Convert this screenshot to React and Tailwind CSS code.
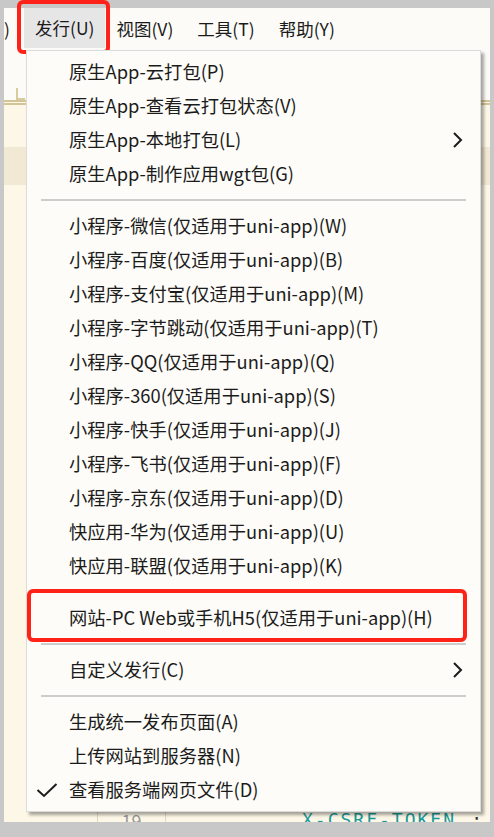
import { useState } from 'react'

const font = { fontFamily: '"Noto Sans CJK SC", "Noto Sans", sans-serif' }

const topMenus = ['发行(U)', '视图(V)', '工具(T)', '帮助(Y)']

// menu groups, separators between
const groups = [
  [
    { label: '原生App-云打包(P)' },
    { label: '原生App-查看云打包状态(V)' },
    { label: '原生App-本地打包(L)', sub: true },
    { label: '原生App-制作应用wgt包(G)' },
  ],
  [
    { label: '小程序-微信(仅适用于uni-app)(W)' },
    { label: '小程序-百度(仅适用于uni-app)(B)' },
    { label: '小程序-支付宝(仅适用于uni-app)(M)' },
    { label: '小程序-字节跳动(仅适用于uni-app)(T)' },
    { label: '小程序-QQ(仅适用于uni-app)(Q)' },
    { label: '小程序-360(仅适用于uni-app)(S)' },
    { label: '小程序-快手(仅适用于uni-app)(J)' },
    { label: '小程序-飞书(仅适用于uni-app)(F)' },
    { label: '小程序-京东(仅适用于uni-app)(D)' },
    { label: '快应用-华为(仅适用于uni-app)(U)' },
    { label: '快应用-联盟(仅适用于uni-app)(K)' },
  ],
  [{ label: '网站-PC Web或手机H5(仅适用于uni-app)(H)', marked: true }],
  [{ label: '自定义发行(C)', sub: true }],
  [
    { label: '生成统一发布页面(A)' },
    { label: '上传网站到服务器(N)' },
    { label: '查看服务端网页文件(D)', checked: true },
  ],
]

function Chevron() {
  return (
    <svg width="12" height="18" viewBox="0 0 12 18" className="text-[#1b1b1b] ml-[-3px]">
      <path d="M3 2 L10 9 L3 16" fill="none" stroke="currentColor" strokeWidth="2" />
    </svg>
  )
}

function Check() {
  return (
    <svg width="22" height="16" viewBox="0 0 22 16" className="text-[#1b1b1b]">
      <path d="M1.5 8 L8 14 L20.5 2" fill="none" stroke="currentColor" strokeWidth="2" />
    </svg>
  )
}

function MenuItem({ item }) {
  return (
    <div className="relative h-[34px] flex items-center text-[18.3px] text-[#1b1b1b]">
      <div className="w-[42px] flex justify-center pr-[2px]">{item.checked && <Check />}</div>
      <span className="flex-1 whitespace-nowrap">{item.label}</span>
      <div className="w-[26px] flex justify-start">{item.sub && <Chevron />}</div>
      {item.marked && (
        <div className="absolute left-0 right-[13px] top-[-12px] bottom-[-7px] border-4 border-[#ff2219] rounded-md" />
      )}
    </div>
  )
}

export default function App() {
  const [open] = useState(true)

  return (
    <div className="w-[494px] h-[837px] bg-[#c8c8c8] pt-2 pl-1 pr-1 pb-[15px] overflow-hidden" style={font}>
      <div className="relative h-full flex flex-col bg-[#fdf7e7]">
        {/* menubar */}
        <div className="h-[42px] shrink-0 bg-[#fcfbf7] flex items-stretch text-[17.5px] text-[#1b1b1b]">
          <div className="w-[20px] overflow-hidden flex items-center">
            <span className="ml-[-11px] whitespace-nowrap">R)</span>
          </div>
          {topMenus.map((m, i) => (
            <div key={m}
              className={`relative flex items-center px-[11px] ${i === 0 ? 'bg-[#e6e6e6] mb-[2px]' : ''} ${i > 1 ? 'ml-[2px]' : ''}`}>
              {m}
              {i === 0 && (
                <div className="absolute left-[-7px] right-[-5px] top-[-8px] bottom-[-6px] border-4 border-[#ff2219] rounded-md" />
              )}
            </div>
          ))}
        </div>

        {/* editor behind the menu */}
        <div className="flex-1 flex flex-col overflow-hidden">
          <div className="h-[50px] shrink-0 bg-[#fcfbf7] flex flex-col">
            <div className="h-[38px]" />
            <div className="ml-[12px] w-[9px] h-[12px] border-l-2 border-b-2 border-[#d9cba0]" />
          </div>
          <div className="h-[5px] shrink-0 border-t-2 border-b-2 border-[#d4c596]" />
          <div className="h-[42px] shrink-0" />
          <div className="h-[38px] shrink-0 bg-[#f1e9d3]" />
          <div className="flex-1 flex flex-col justify-end">
            <div className="h-[11px] shrink-0 flex items-start overflow-hidden">
              <div className="w-[93px]" />
              <div className="w-[69px] self-stretch border-l border-r border-[#e2d8bd] text-center text-[18px] text-[#9a9a9a] leading-[18px] flex justify-center">
                19
              </div>
              <div className="flex-1 flex justify-between pl-[136px] pr-[6px] text-[18px] leading-[18px] tracking-[2px] text-[#1a9b9b]"
                style={{ fontFamily: '"DejaVu Sans Mono", monospace' }}>
                <span>X-CSRF-TOKEN</span>
                <span className="text-[#333]">:</span>
              </div>
            </div>
          </div>
        </div>

        {/* dropdown */}
        {open && (
          <div className="absolute left-[22px] top-[42px] w-[455px] bg-[#fdfcf8] border border-[#dcdcdc] pt-[4px] pb-[4px] shadow-[3px_3px_3px_rgba(0,0,0,0.35)]">
            {groups.map((g, gi) => (
              <div key={gi}>
                {gi > 0 && (
                  <div className="h-[18px] flex items-center pl-[14px] pr-[14px]">
                    <div className="h-[2px] w-full bg-[#cdcdcd]" />
                  </div>
                )}
                {g.map(item => <MenuItem key={item.label} item={item} />)}
              </div>
            ))}
          </div>
        )}
      </div>
    </div>
  )
}
